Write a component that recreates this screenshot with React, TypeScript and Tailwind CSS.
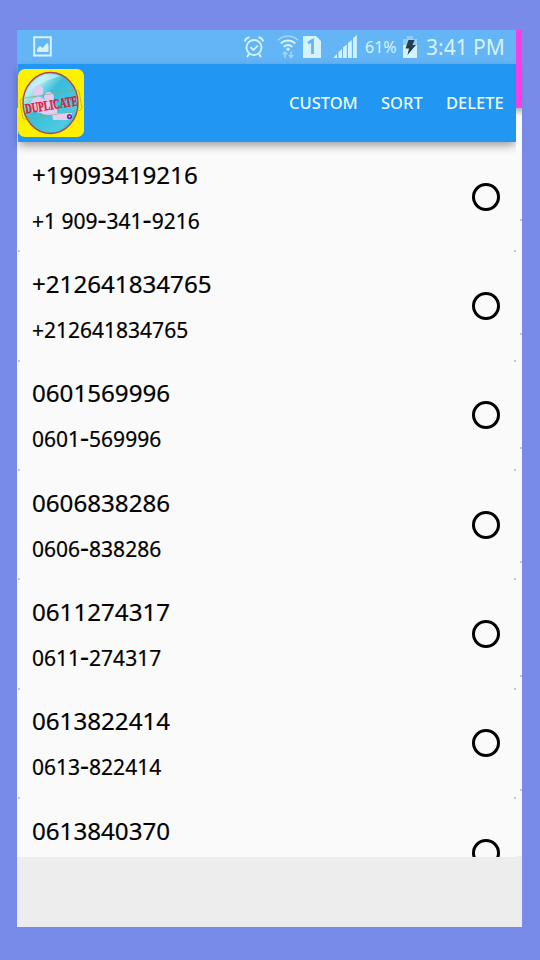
interface Contact {
  name: string;
  number?: string;
}

const contacts: Contact[] = [
  { name: "+19093419216", number: "+1 909-341-9216" },
  { name: "+212641834765", number: "+212641834765" },
  { name: "0601569996", number: "0601-569996" },
  { name: "0606838286", number: "0606-838286" },
  { name: "0611274317", number: "0611-274317" },
  { name: "0613822414", number: "0613-822414" },
  { name: "0613840370" },
];

function StatusBar() {
  return (
    <div className="flex h-[34px] shrink-0 items-center bg-[#64b5f6] pl-[15px] text-[#d5f3ff]">
      <svg width="19" height="22" viewBox="0 0 19 22" fill="none">
        <path d="M1.2 1.2h16.6v18.3H1.2z" stroke="currentColor" strokeWidth="2" />
        <path d="M4 16v-3l3-3 2.5 2L14 7l1.5 2v7z" fill="currentColor" />
      </svg>
      <svg className="ml-[192px]" width="20" height="22" viewBox="0 0 20 22" fill="none" stroke="currentColor">
        <circle cx="10" cy="11.5" r="7.5" strokeWidth="1.8" />
        <path d="M6.5 11.2l2.8 2.7 4.5-4.2" strokeWidth="1.8" />
        <path d="M.8 5.5C1.4 3.2 3 1.6 5.5 1.2M19.2 5.5c-.6-2.3-2.2-3.9-4.7-4.3" strokeWidth="1.9" />
        <path d="M5 18l-2 3M15 18l2 3" strokeWidth="2" />
      </svg>
      <svg className="ml-[13px]" width="22" height="24" viewBox="0 0 22 24" fill="none" stroke="currentColor">
        <path d="M.8 5.2C6.5-.2 15.5-.2 21.2 5.2" strokeWidth="1.4" opacity=".6" />
        <path d="M3.7 8.4c4.2-3.8 10.4-3.8 14.6 0M6.6 11.8c2.6-2.2 6.2-2.2 8.8 0" strokeWidth="2" />
        <circle cx="11" cy="14.2" r="1.6" fill="currentColor" stroke="none" />
        <path d="M8 23v-6M5.8 19.5L8 17l2.2 2.5M14 16.5v6M11.8 20l2.2 2.5 2.2-2.5" strokeWidth="1.5" opacity=".55" />
      </svg>
      <svg className="ml-1" width="18" height="22" viewBox="0 0 18 22">
        <path d="M0 0h13l5 5v17H0z" fill="currentColor" />
        <path d="M5 7l4.5-2.5V18" fill="none" stroke="#64b5f6" strokeWidth="2.8" />
      </svg>
      <svg className="ml-[12px]" width="24" height="24" viewBox="0 0 24 24" fill="currentColor">
        <path d="M1 23v-1l3-3v4zM5.5 23v-6l3.5-3v9zM10 23V12.5l3.8-3V23zM15 23V8l3.8-3v18zM20 23V3.2L23.8 0v23z" />
      </svg>
      <span className="ml-[8px] w-[35px] text-[16px] leading-none whitespace-nowrap">
        61%
      </span>
      <svg className="ml-[3px]" width="14" height="22" viewBox="0 0 14 22">
        <path d="M4 0h6v3h4v19H0V3h4z" fill="#94cdf8" />
        <path d="M0 9h14v13H0z" fill="#d5f3ff" />
        <path d="M5.5 4h6L9.5 9H13l-8.5 10L6 12.5H2.5z" fill="#263f50" />
      </svg>
      <span className="ml-[9px] text-[21px] leading-none whitespace-nowrap">
        3:41 PM
      </span>
    </div>
  );
}

function Logo() {
  return (
    <svg width="66" height="68" viewBox="0 0 66 68" className="-mt-px">
      <defs>
        <linearGradient id="ball" x1="0" y1="0" x2="1" y2="1">
          <stop offset="0" stopColor="#35a9c6" />
          <stop offset=".22" stopColor="#b5eef4" />
          <stop offset=".42" stopColor="#38bdd8" />
          <stop offset=".8" stopColor="#4dcbe2" />
          <stop offset="1" stopColor="#168aa9" />
        </linearGradient>
      </defs>
      <rect width="66" height="68" rx="7" fill="#fff000" />
      <ellipse cx="32.5" cy="34" rx="27.5" ry="30.5" fill="url(#ball)" stroke="#a9474b" strokeWidth="1.4" />
      <path d="M9 23C13 9 28 3 42 7 29 11 20 16 9 23z" fill="#d3f7fa" opacity=".55" />
      <g fill="#e2ccef">
        <circle cx="20" cy="22" r="5.5" />
        <path d="M12 38c0-13 16-13 17-2l-1 9-15-3z" />
        <circle cx="31" cy="28" r="5" />
        <path d="M24 42c0-12 14-12 15-2v7l-15-2z" />
        <path d="M34 44h20v5l-5 2H35z" />
      </g>
      <g transform="rotate(-9 33 36)">
        <rect x="3" y="25" width="60" height="21" rx="3" fill="none" stroke="#94a65c" strokeWidth=".6" />
        <text
          x="7"
          y="40.5"
          textLength="53"
          lengthAdjust="spacingAndGlyphs"
          fill="#d51f3b"
          stroke="#d51f3b"
          strokeWidth=".5"
          className="font-['Liberation_Serif',serif] text-[14px] font-bold"
        >
          DUPLICATE
        </text>
      </g>
      <circle cx="51.5" cy="47.5" r="1.8" fill="#dcbef0" stroke="#6424bb" strokeWidth="1.6" />
    </svg>
  );
}

function Toolbar() {
  return (
    <header className="relative z-10 flex h-[78px] shrink-0 items-center bg-[#2196f3] pr-[10px] text-[16.5px] font-medium text-[#edfaff] shadow-[0_4px_9px_-1px_rgba(0,0,0,0.4)]">
      <Logo />
      <nav className="ml-auto flex items-center pt-px">
        <button className="w-[92px] text-left">CUSTOM</button>
        <button className="w-[65px] text-left">SORT</button>
        <button className="w-[60px] text-left">DELETE</button>
      </nav>
    </header>
  );
}

// Hyphens are set larger than the digits so they read as wide separators.
function PhoneNumber({ value }: { value: string }) {
  return (
    <>
      {value.split("-").map((part, i) => (
        <span key={i}>
          {i > 0 && <span className="text-[28px] leading-none">-</span>}
          {part}
        </span>
      ))}
    </>
  );
}

function ContactRow({ name, number }: Contact) {
  return (
    <li className="relative flex h-[109.33px] shrink-0 items-center justify-between pr-[16.5px] pl-[14px]">
      <div className="flex flex-col pt-[2px] text-black [-webkit-text-stroke:0.2px_currentColor]">
        <span className="h-[47px] text-[24.15px] leading-[47px]">{name}</span>
        <span className="h-[47px] text-[21px] leading-[47px]">
          {number && <PhoneNumber value={number} />}
        </span>
      </div>
      <span className="size-[28px] rounded-full border-3 border-black" />
      <span className="absolute -bottom-px left-0 h-[2px] w-[2px] bg-[#c5c5cb]" />
      <span className="absolute right-0 -bottom-px h-[2px] w-[2px] bg-[#c5c5cb]" />
    </li>
  );
}

export default function App() {
  return (
    <div className="h-[960px] w-[540px] bg-[#788be9] pt-[30px] pl-[17px] font-['Noto_Sans',sans-serif]">
      <div className="flex h-[897px] w-[505px] bg-[#ededed]">
        <div className="h-[827px] w-px bg-[#fafafa]">
          <div className="h-[78px] bg-[#a98df0]" />
        </div>
        <main className="flex w-[498px] flex-col">
          <StatusBar />
          <Toolbar />
          <ul className="h-[715px] overflow-hidden bg-[#fafafa]">
            {contacts.map((contact) => (
              <ContactRow key={contact.name} {...contact} />
            ))}
          </ul>
        </main>
        <div className="relative z-20 flex h-[826px] w-[6px] flex-col bg-[#fafafa]">
          <div className="h-[78px] shrink-0 bg-[#fb3ce4]" />
          <div className="h-2 shrink-0 bg-linear-to-b from-[#b5b5b5] to-[#fafafa]" />
          <div className="flex flex-col gap-[112px] self-end pt-[103px]">
            {[1, 2, 3, 4, 5, 6].map((tick) => (
              <span key={tick} className="h-[2px] w-[2px] bg-[#c5c5cb]" />
            ))}
          </div>
        </div>
      </div>
    </div>
  );
}
